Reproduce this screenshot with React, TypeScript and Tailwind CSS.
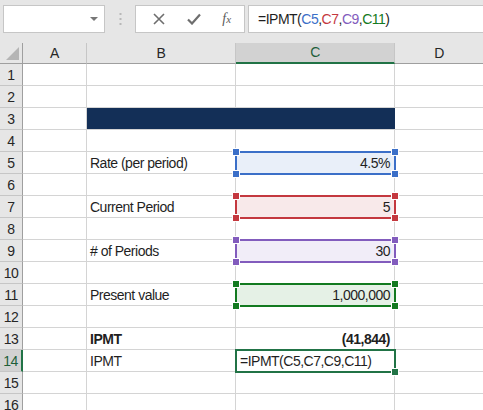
import React from "react";

type Cell = { text?: React.ReactNode; bold?: boolean; right?: boolean; fill?: string };
type Row = { B?: Cell; C?: Cell; navy?: boolean };

const ROWS: Record<number, Row> = {
  3: { navy: true },
  5: { B: { text: "Rate (per period)" }, C: { text: "4.5%", right: true, fill: "bg-[#e9eff9]" } },
  7: { B: { text: "Current Period" }, C: { text: "5", right: true, fill: "bg-[#f8e9ea]" } },
  9: { B: { text: "# of Periods" }, C: { text: "30", right: true, fill: "bg-[#f1edf8]" } },
  11: { B: { text: "Present value" }, C: { text: "1,000,000", right: true, fill: "bg-[#e5f1e6]" } },
  13: { B: { text: "IPMT", bold: true }, C: { text: "(41,844)", bold: true, right: true } },
  14: { B: { text: "IPMT" }, C: { text: "=IPMT(C5,C7,C9,C11)" } },
};

// highlighted ranges that sit over column C
const RANGES = [
  { row: 5, border: "border-[#3b6fc8]", handle: "bg-[#3b6fc8]" },
  { row: 7, border: "border-[#c4383f]", handle: "bg-[#c4383f]" },
  { row: 9, border: "border-[#825cbd]", handle: "bg-[#825cbd]" },
  { row: 11, border: "border-[#137a20]", handle: "bg-[#137a20]" },
];

const HEADER_H = 21;
const ROW_H = 22;
const rowTop = (r: number) => HEADER_H + (r - 1) * ROW_H;

function Formula() {
  return (
    <>
      <span>=IPMT(</span>
      <span className="text-[#3b6fc8]">C5</span>,
      <span className="text-[#c4383f]">C7</span>,
      <span className="text-[#825cbd]">C9</span>,
      <span className="text-[#137a20]">C11</span>
      <span>)</span>
    </>
  );
}

function Handle({ cls, pos }: { cls: string; pos: string }) {
  return <span className={`absolute w-[6px] h-[6px] outline outline-1 outline-white ${cls} ${pos}`} />;
}

export default function App() {
  return (
    <div className="w-[483px] h-[410px] overflow-hidden bg-white text-[14px] tracking-[-0.5px] text-[#1f1f1f] font-['Liberation_Sans',Arial,sans-serif]">
      {/* formula bar */}
      <div className="h-[43px] bg-[#e6e6e6] flex items-start pt-[5px] pl-[3px]">
        <div className="w-[102px] h-[28px] bg-white border border-[#c6c6c6] flex items-center justify-end pr-[6px]">
          <svg width="8" height="4" viewBox="0 0 8 4">
            <polygon points="0,0 8,0 4,4" fill="#777" />
          </svg>
        </div>
        <div className="w-[30px] h-[28px] flex items-center justify-center">
          <svg width="3" height="12" viewBox="0 0 3 12">
            <rect x="0.5" y="0" width="2" height="2" fill="#b8b8b8" />
            <rect x="0.5" y="5" width="2" height="2" fill="#b8b8b8" />
            <rect x="0.5" y="10" width="2" height="2" fill="#b8b8b8" />
          </svg>
        </div>
        <div className="w-[110px] h-[28px] bg-white border border-[#c6c6c6] flex items-center justify-around pl-[6px] pr-[2px]">
          <svg width="12" height="12" viewBox="0 0 12 12">
            <path d="M1 1 L11 11 M11 1 L1 11" stroke="#6e6e6e" strokeWidth="1.6" />
          </svg>
          <svg width="14" height="12" viewBox="0 0 14 12">
            <path d="M1 6.5 L5 10.5 L13 1.5" stroke="#6e6e6e" strokeWidth="2.2" fill="none" />
          </svg>
          <span className="italic text-[#5a5a5a] text-[14px] tracking-normal font-['Liberation_Serif',serif] leading-none">
            f<span className="text-[11px]">x</span>
          </span>
        </div>
        <div className="ml-[3px] flex-1 h-[28px] bg-white border border-[#c6c6c6] border-r-0 flex items-center pl-[9px] leading-none">
          <Formula />
        </div>
      </div>

      {/* grid */}
      <div className="relative">
        {/* column headers */}
        <div className="flex h-[21px] bg-[#e6e6e6] text-[#262626]">
          <div className="w-[23px] border-r border-b border-[#9f9f9f] flex items-end justify-end pr-[3px] pb-[3px]">
            <svg width="13" height="13" viewBox="0 0 13 13">
              <polygon points="13,0 13,13 0,13" fill="#b5b5b5" />
            </svg>
          </div>
          <div className="w-[64px] border-r border-b border-r-[#c6c6c6] border-b-[#9f9f9f] flex items-center justify-center">A</div>
          <div className="w-[149px] border-r border-b border-r-[#c6c6c6] border-b-[#9f9f9f] flex items-center justify-center">B</div>
          <div className="w-[159px] bg-[#d2d2d2] border-r border-r-[#c6c6c6] border-b-2 border-b-[#217346] flex items-center justify-center text-[#1e5f3a]">C</div>
          <div className="flex-1 border-b border-[#9f9f9f] flex items-center justify-center">D</div>
        </div>

        {Array.from({ length: 16 }, (_, i) => i + 1).map((r) => {
          const row = ROWS[r] || {};
          const active = r === 14;
          return (
            <div key={r} className="flex h-[22px] leading-[22px]">
              <div
                className={`w-[23px] shrink-0 border-b border-[#c6c6c6] flex justify-center ${
                  active
                    ? "bg-[#d2d2d2] border-r-2 border-r-[#217346] text-[#1e5f3a]"
                    : "bg-[#e6e6e6] border-r border-r-[#9f9f9f] text-[#262626]"
                }`}
              >
                {r}
              </div>
              <div className="w-[64px] shrink-0 border-r border-b border-[#d4d4d4]" />
              {row.navy ? (
                <div className="w-[308px] shrink-0 bg-[#132f57] border-b border-[#d4d4d4]" />
              ) : (
                <>
                  <div
                    className={`w-[149px] shrink-0 border-r border-b border-[#d4d4d4] pl-[3px] whitespace-nowrap ${
                      row.B?.bold ? "font-bold" : ""
                    }`}
                  >
                    {row.B?.text}
                  </div>
                  <div
                    className={`w-[159px] shrink-0 border-r border-b border-[#d4d4d4] px-[4px] whitespace-nowrap ${
                      row.C?.right ? "text-right" : ""
                    } ${row.C?.bold ? "font-bold" : ""} ${row.C?.fill || ""}`}
                  >
                    {row.C?.text}
                  </div>
                </>
              )}
              <div className="flex-1 border-b border-[#d4d4d4]" />
            </div>
          );
        })}

        {/* range highlights over column C */}
        {RANGES.map((g) => (
          <div
            key={g.row}
            className={`absolute left-[235px] w-[161px] h-[24px] border-2 ${g.border}`}
            style={{ top: rowTop(g.row) - 1 }}
          >
            <Handle cls={g.handle} pos="-left-[4px] -top-[4px]" />
            <Handle cls={g.handle} pos="-right-[4px] -top-[4px]" />
            <Handle cls={g.handle} pos="-left-[4px] -bottom-[4px]" />
            <Handle cls={g.handle} pos="-right-[4px] -bottom-[4px]" />
          </div>
        ))}

        {/* active cell C14 */}
        <div
          className="absolute left-[235px] w-[161px] h-[24px] border-2 border-[#217346]"
          style={{ top: rowTop(14) - 1 }}
        >
          <span className="absolute -right-[4px] -bottom-[4px] w-[6px] h-[6px] bg-[#217346] outline outline-1 outline-white" />
        </div>
      </div>
    </div>
  );
}
